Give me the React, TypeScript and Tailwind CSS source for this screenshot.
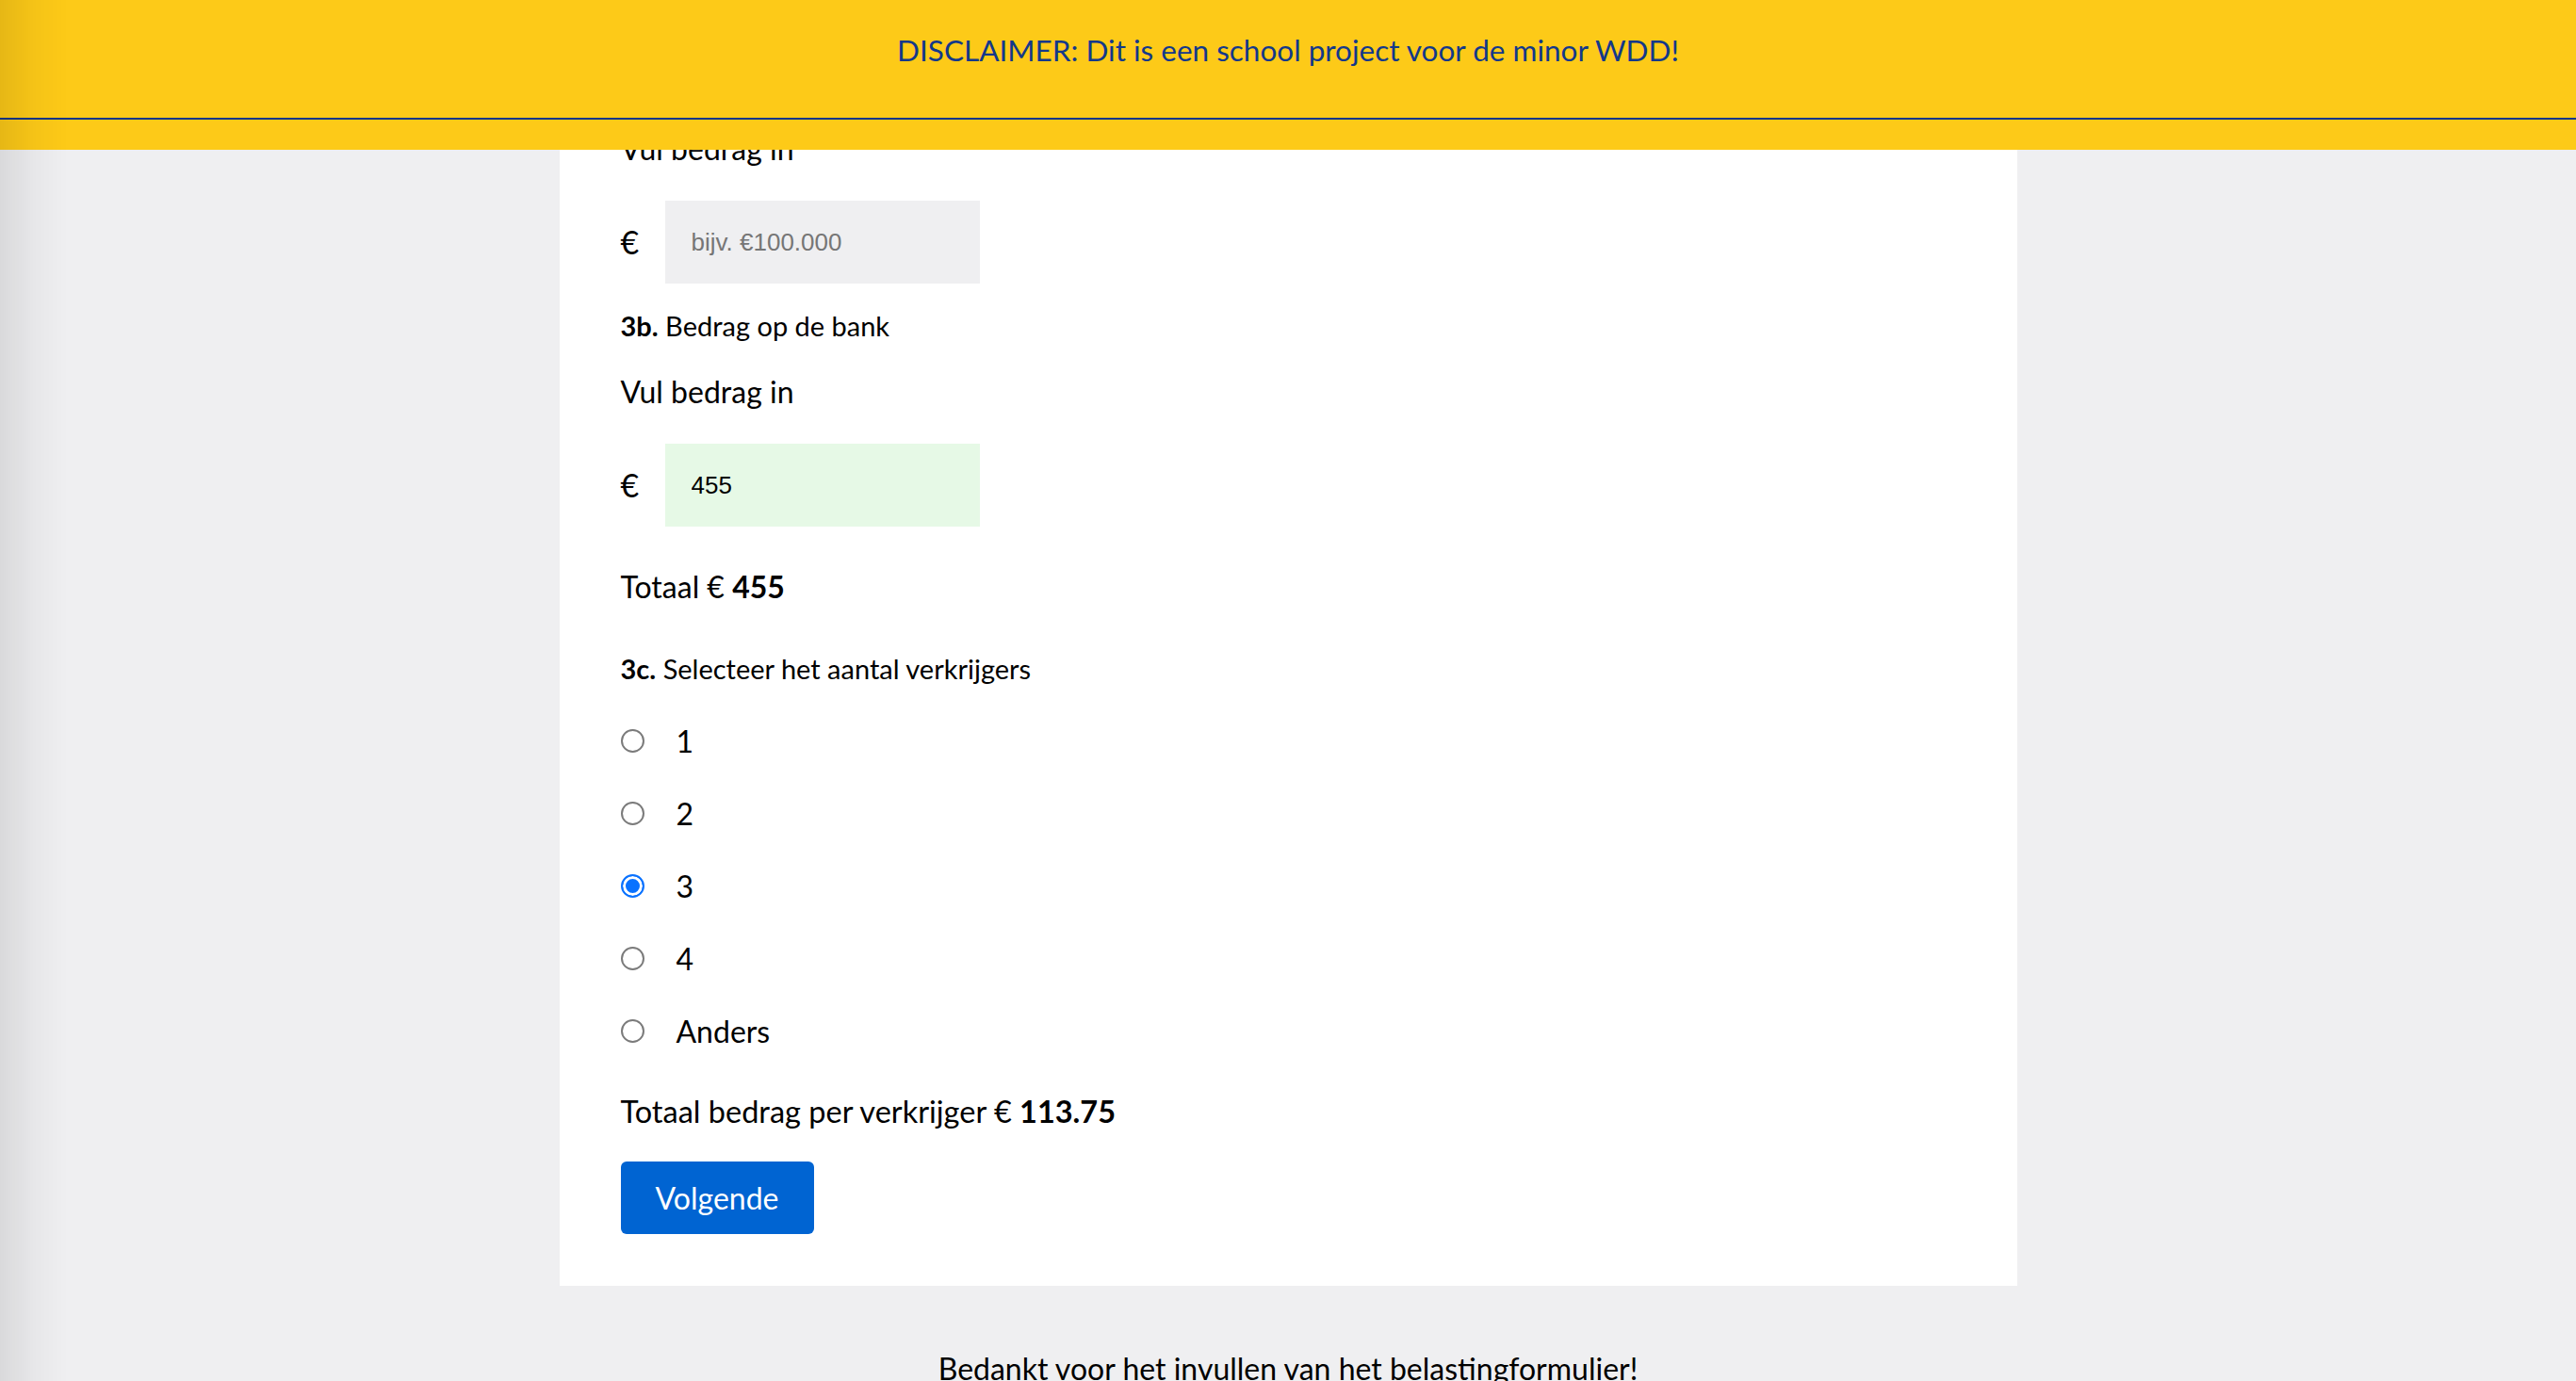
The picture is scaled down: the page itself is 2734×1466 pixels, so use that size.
import React from "react";

const body = { fontFamily: "Lato, 'Open Sans', sans-serif" } as const;

function Heading({ num, text, className }: { num: string; text: string; className?: string }) {
  return (
    <div className={"text-[29px] leading-[36px] text-black " + (className ?? "")}>
      <span className="font-bold">{num}</span> {text}
    </div>
  );
}

function AmountInput({ value, placeholder, filled, className }: { value?: string; placeholder?: string; filled?: boolean; className?: string }) {
  return (
    <div className={"flex items-center " + (className ?? "")}>
      <span className="w-[47px] text-[34px] leading-[40px] text-black">€</span>
      <input
        type="text"
        defaultValue={value}
        placeholder={placeholder}
        className={
          "h-[88px] w-[334px] pl-[28px] text-[26px] text-black outline-none placeholder:text-[#767676] " +
          (filled ? "bg-[#e6f9e6]" : "bg-[#efeff1]")
        }
        style={{ fontFamily: "'Liberation Sans', Arial, sans-serif" }}
      />
    </div>
  );
}

function Radio({ label, checked }: { label: string; checked?: boolean }) {
  return (
    <label className="flex h-[77px] items-center">
      <input
        type="radio"
        name="verkrijgers"
        defaultChecked={checked}
        className="m-0 h-[25px] w-[25px] appearance-none rounded-full border-2 border-[#7b7b7b] bg-white checked:border-[#0a72ff] checked:bg-[#0a72ff] checked:shadow-[inset_0_0_0_3px_white]"
      />
      <span className="ml-[34px] text-[32px] leading-[40px] text-black">{label}</span>
    </label>
  );
}

export default function App() {
  return (
    <div className="relative h-screen overflow-hidden bg-[#efeff1]" style={body}>
      {/* fixed disclaimer banner */}
      <div className="fixed inset-x-0 top-0 z-10 h-[159px] bg-[#fdca18]">
        <div className="h-[127px] border-b-[2px] border-[#0b3587] pt-[33px] text-center text-[31.5px] leading-[40px] text-[#13388a]">
          DISCLAIMER: Dit is een school project voor de minor WDD!
        </div>
      </div>

      {/* window edge shading */}
      <div className="pointer-events-none fixed inset-y-0 left-0 z-20 w-[72px] bg-gradient-to-r from-[rgba(0,0,0,0.09)] via-[rgba(0,0,0,0.03)] to-transparent" />

      <main className="flex flex-col items-center">
        <div className="w-[1547px] bg-white px-[65px] pb-[55px] pt-[138px]">
          <div className="text-[32px] leading-[40px] text-black">Vul bedrag in</div>
          <AmountInput placeholder="bijv. €100.000" className="mt-[35px]" />

          <Heading num="3b." text="Bedrag op de bank" className="mt-[27px]" />
          <div className="mt-[32px] text-[32px] leading-[40px] text-black">Vul bedrag in</div>
          <AmountInput value="455" filled className="mt-[35px]" />

          <div className="mt-[44px] text-[32px] leading-[40px] text-black">
            Totaal € <span className="font-bold">455</span>
          </div>

          <Heading num="3c." text="Selecteer het aantal verkrijgers" className="mt-[49px]" />

          <div className="mt-[20px] flex flex-col">
            <Radio label="1" />
            <Radio label="2" />
            <Radio label="3" checked />
            <Radio label="4" />
            <Radio label="Anders" />
          </div>

          <div className="mt-[27px] text-[32.5px] leading-[40px] text-black">
            Totaal bedrag per verkrijger € <span className="font-bold">113.75</span>
          </div>

          <button className="mt-[33px] flex h-[77px] w-[205px] items-center justify-center rounded-[6px] bg-[#0064d2] text-[32px] text-white">
            Volgende
          </button>
        </div>

        <p className="mt-[68px] text-center text-[32px] leading-[40px] text-black">
          Bedankt voor het invullen van het belastingformulier!
        </p>
      </main>
    </div>
  );
}
